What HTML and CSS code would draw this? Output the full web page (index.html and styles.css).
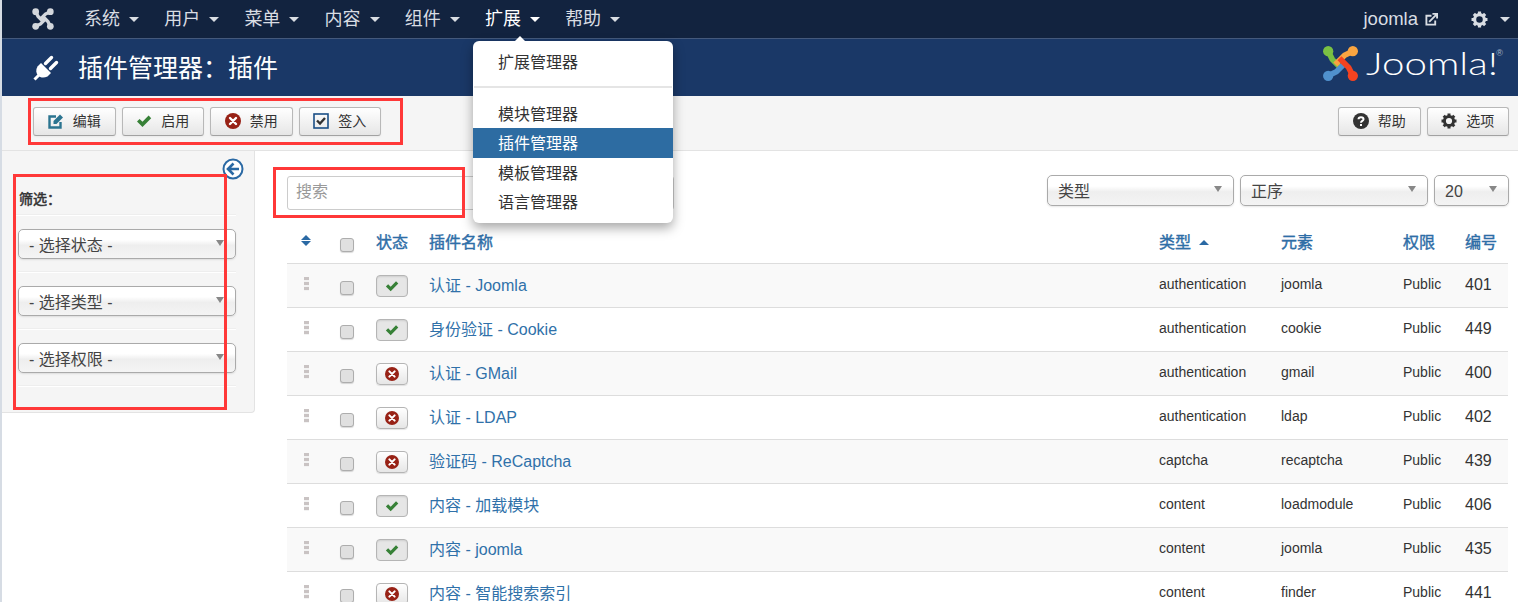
FILE: index.html
```html
<!DOCTYPE html>
<html lang="zh-CN">
<head>
    <meta charset="UTF-8">
    <title>插件管理器：插件</title>
    <link rel="stylesheet" href="styles.css">
</head>
<body>
    <svg class="defs" width="0" height="0">
        <symbol id="i-check" viewBox="0 0 16 16"><path d="M1 8.500l2.600-2.600 2.900 2.900L12.600 2.600 15.200 5.200 6.500 14z" fill="currentColor"/></symbol>
        <symbol id="i-cross" viewBox="0 0 16 16"><circle cx="8" cy="8" r="8" fill="currentColor"/><path d="M5 5l6 6M11 5l-6 6" stroke="#fff" stroke-width="2.400" stroke-linecap="round"/></symbol>
        <symbol id="i-gear" viewBox="0 0 16 16"><circle cx="8" cy="8" r="4.600" fill="none" stroke="currentColor" stroke-width="3"/><path d="M8 .5V4M8 12v3.500M.5 8H4M12 8h3.500M2.700 2.700l2.500 2.500M10.800 10.800l2.500 2.500M13.300 2.700l-2.500 2.500M5.200 10.800l-2.500 2.500" stroke="currentColor" stroke-width="3"/></symbol>
    </svg>

    <nav class="navbar">
        <svg class="nav-logo" viewBox="0 0 36 36">
            <g fill="none" stroke="currentColor" stroke-width="5.500">
                <path d="M6 6l4 8 9 9M30 6l-8 4-9 9M30 30l-4-8-9-9M6 30l8-4 9-9"/>
            </g>
            <g fill="currentColor"><circle cx="6" cy="6" r="5.500"/><circle cx="30" cy="6" r="5.500"/><circle cx="6" cy="30" r="5.500"/><circle cx="30" cy="30" r="5.500"/></g>
        </svg>
        <ul class="nav-menu">
            <li>系统<span class="caret"></span></li>
            <li>用户<span class="caret"></span></li>
            <li>菜单<span class="caret"></span></li>
            <li>内容<span class="caret"></span></li>
            <li>组件<span class="caret"></span></li>
            <li class="open">扩展<span class="caret"></span></li>
            <li>帮助<span class="caret"></span></li>
        </ul>
        <div class="nav-right">
            <span class="nav-user">joomla</span>
            <svg class="nav-ext" viewBox="0 0 14 14"><path d="M11 8v4.500H1.500V3H7" fill="none" stroke="currentColor" stroke-width="2"/><path d="M4.500 9.500L12 2M8 1h5v5" fill="none" stroke="currentColor" stroke-width="2"/></svg>
            <svg class="nav-gear"><use href="#i-gear"/></svg>
            <span class="caret"></span>
        </div>
    </nav>

    <header class="title-bar">
        <svg class="plug" viewBox="0 0 26 26">
            <path d="M8 8L18 18 14.500 21.500C10.500 23.500 7 22.500 5 20.500 3 18 2.500 15 4.500 11.500z" fill="#fff"/>
            <path d="M12.500 8.500L18.500 2.500M17.500 13.500L23.500 7.500" stroke="#fff" stroke-width="3.400" stroke-linecap="round"/>
            <path d="M1.500 24.500L6 20" stroke="#fff" stroke-width="3"/>
        </svg>
        <h1>插件管理器：插件</h1>
        <div class="brand">
            <svg class="brand-mark" viewBox="0 0 36 36">
                <g fill="none" stroke-width="5.500">
                    <path d="M6 6l4 8 9 9" stroke="#7ac143"/>
                    <path d="M6 30l8-4 9-9" stroke="#5091cd"/>
                    <path d="M30 6l-8 4-9 9" stroke="#f9a541"/>
                    <path d="M30 30l-4-8-9-9" stroke="#f44321"/>
                </g>
                <circle cx="6" cy="6" r="5" fill="#7ac143"/><circle cx="30" cy="6" r="5" fill="#f9a541"/>
                <circle cx="6" cy="30" r="5" fill="#5091cd"/><circle cx="30" cy="30" r="5" fill="#f44321"/>
            </svg>
            <span class="brand-name">Joomla!</span><sup class="brand-reg">®</sup>
        </div>
    </header>

    <div class="toolbar">
        <button class="btn"><svg class="ico" viewBox="0 0 16 16"><path d="M12.500 9v5.500h-11v-11H8" fill="none" stroke="#2b7490" stroke-width="2.400"/><path d="M5.500 8l6.500-6.500 3 3L8.500 11h-3z" fill="#2b7490"/></svg>编辑</button>
        <button class="btn"><svg class="ico ico-green"><use href="#i-check"/></svg>启用</button>
        <button class="btn"><svg class="ico ico-red"><use href="#i-cross"/></svg>禁用</button>
        <button class="btn"><svg class="ico" viewBox="0 0 16 16"><rect x="1" y="1" width="14" height="14" fill="none" stroke="#1b4f86" stroke-width="1.600"/><path d="M4 7.500l3 3 5-5.500" fill="none" stroke="#333" stroke-width="2.400"/></svg>签入</button>
        <div class="toolbar-right">
            <button class="btn"><svg class="ico" viewBox="0 0 16 16"><circle cx="8" cy="8" r="8" fill="#333"/><path d="M5.500 6.200C5.500 3.600 10.500 3.600 10.500 6.200 10.500 8 8 7.800 8 9.800" fill="none" stroke="#fff" stroke-width="2"/><rect x="7" y="11" width="2" height="2" fill="#fff"/></svg>帮助</button>
            <button class="btn"><svg class="ico"><use href="#i-gear"/></svg>选项</button>
        </div>
    </div>

    <div class="content">
        <aside class="sidebar">
            <svg class="side-toggle" viewBox="0 0 22 22"><circle cx="11" cy="11" r="9.500" fill="#fff" stroke="#2a69a4" stroke-width="2"/><path d="M11.500 5.500L6 11l5.500 5.500M6.500 11H17" fill="none" stroke="#2a69a4" stroke-width="2.600"/></svg>
            <h4 class="side-title">筛选：</h4>
            <div class="side-row"><div class="select">- 选择状态 -</div></div>
            <div class="side-row"><div class="select">- 选择类型 -</div></div>
            <div class="side-row"><div class="select">- 选择权限 -</div></div>
        </aside>

        <main class="main">
            <div class="filter-bar">
                <input class="search" type="text" placeholder="搜索">
                <div class="select select-type">类型</div>
                <div class="select select-order">正序</div>
                <div class="select select-limit">20</div>
            </div>
            <table class="list">
                <colgroup>
                    <col class="c-sort"><col class="c-check"><col class="c-state"><col class="c-name">
                    <col class="c-type"><col class="c-elem"><col class="c-access"><col class="c-id">
                </colgroup>
                <thead>
                    <tr>
                        <th class="center"><span class="sort-up"></span><span class="sort-down"></span></th>
                        <th class="center"><span class="check"></span></th>
                        <th>状态</th>
                        <th>插件名称</th>
                        <th>类型<span class="asc"></span></th>
                        <th>元素</th>
                        <th>权限</th>
                        <th>编号</th>
                    </tr>
                </thead>
                <tbody>
                    <tr><td class="center"><span class="grip"></span></td><td class="center"><span class="check"></span></td><td><span class="state on"><svg><use href="#i-check"/></svg></span></td><td class="name">认证 - Joomla</td><td class="small">authentication</td><td class="small">joomla</td><td class="small">Public</td><td class="id">401</td></tr>
                    <tr><td class="center"><span class="grip"></span></td><td class="center"><span class="check"></span></td><td><span class="state on"><svg><use href="#i-check"/></svg></span></td><td class="name">身份验证 - Cookie</td><td class="small">authentication</td><td class="small">cookie</td><td class="small">Public</td><td class="id">449</td></tr>
                    <tr><td class="center"><span class="grip"></span></td><td class="center"><span class="check"></span></td><td><span class="state off"><svg><use href="#i-cross"/></svg></span></td><td class="name">认证 - GMail</td><td class="small">authentication</td><td class="small">gmail</td><td class="small">Public</td><td class="id">400</td></tr>
                    <tr><td class="center"><span class="grip"></span></td><td class="center"><span class="check"></span></td><td><span class="state off"><svg><use href="#i-cross"/></svg></span></td><td class="name">认证 - LDAP</td><td class="small">authentication</td><td class="small">ldap</td><td class="small">Public</td><td class="id">402</td></tr>
                    <tr><td class="center"><span class="grip"></span></td><td class="center"><span class="check"></span></td><td><span class="state off"><svg><use href="#i-cross"/></svg></span></td><td class="name">验证码 - ReCaptcha</td><td class="small">captcha</td><td class="small">recaptcha</td><td class="small">Public</td><td class="id">439</td></tr>
                    <tr><td class="center"><span class="grip"></span></td><td class="center"><span class="check"></span></td><td><span class="state on"><svg><use href="#i-check"/></svg></span></td><td class="name">内容 - 加载模块</td><td class="small">content</td><td class="small">loadmodule</td><td class="small">Public</td><td class="id">406</td></tr>
                    <tr><td class="center"><span class="grip"></span></td><td class="center"><span class="check"></span></td><td><span class="state on"><svg><use href="#i-check"/></svg></span></td><td class="name">内容 - joomla</td><td class="small">content</td><td class="small">joomla</td><td class="small">Public</td><td class="id">435</td></tr>
                    <tr><td class="center"><span class="grip"></span></td><td class="center"><span class="check"></span></td><td><span class="state off"><svg><use href="#i-cross"/></svg></span></td><td class="name">内容 - 智能搜索索引</td><td class="small">content</td><td class="small">finder</td><td class="small">Public</td><td class="id">441</td></tr>
                </tbody>
            </table>
        </main>
    </div>

    <ul class="dropdown">
        <li>扩展管理器</li>
        <li class="divider"></li>
        <li>模块管理器</li>
        <li class="active">插件管理器</li>
        <li>模板管理器</li>
        <li>语言管理器</li>
    </ul>

    <!-- 截图上的红框标注 -->
    <div class="mark mark-toolbar"></div>
    <div class="mark mark-filter"></div>
    <div class="mark mark-search"></div>
</body>
</html>
```

FILE: styles.css
```css
* {
    margin: 0;
    padding: 0;
    box-sizing: border-box;
}

html, body {
    height: 602px;
    overflow: hidden;
}

body {
    position: relative;
    background: #fff;
    color: #333;
    font-family: "Liberation Sans", "Noto Sans CJK SC", sans-serif;
    font-size: 14px;
    border-left: 2px solid #d6dce4;
}

ul {
    list-style: none;
}

.defs {
    position: absolute;
}

.caret {
    display: inline-block;
    width: 0;
    height: 0;
    border-left: 5px solid transparent;
    border-right: 5px solid transparent;
    border-top: 5px solid #d9dde3;
}

/* 顶部导航 */
.navbar {
    display: flex;
    align-items: center;
    height: 39px;
    padding-left: 30px;
    background: #12233f;
    border-bottom: 1px solid #44597c;
    color: #d9dde3;
    font-size: 18px;
}

.nav-logo {
    width: 22px;
    height: 22px;
    color: #d3d7dc;
}

.nav-menu {
    display: flex;
    gap: 25.200px;
    margin-left: 30px;
}

.nav-menu li {
    display: flex;
    align-items: center;
    gap: 9px;
    line-height: 38px;
}

.nav-menu .open {
    color: #fff;
}

.nav-menu .open .caret {
    border-top-color: #fff;
}

.nav-right {
    display: flex;
    align-items: center;
    margin-left: auto;
    padding-right: 8px;
}

.nav-user {
    font-size: 18.500px;
}

.nav-ext {
    width: 13px;
    height: 13px;
    margin: 0 33px 0 7px;
}

.nav-gear {
    width: 17px;
    height: 17px;
    margin-right: 12px;
}

/* 标题栏 */
.title-bar {
    display: flex;
    align-items: center;
    height: 57px;
    padding-left: 31px;
    background: #1a3867;
    color: #fff;
}

.plug {
    width: 26px;
    height: 26px;
}

.title-bar h1 {
    margin-left: 19px;
    padding-bottom: 4px;
    font-size: 25px;
    font-weight: normal;
}

.brand {
    display: flex;
    align-items: center;
    margin-left: auto;
    padding: 0 15px 8px 0;
}

.brand-mark {
    width: 37px;
    height: 37px;
}

.brand-name {
    display: inline-block;
    width: 130px;
    margin-left: 7px;
    padding-bottom: 2px;
    font-family: Lato, "Liberation Sans", sans-serif;
    font-size: 32px;
    font-weight: 300;
    transform: scaleX(1.26);
    transform-origin: left center;
}

.brand-reg {
    align-self: flex-start;
    margin-top: 5px;
    font-size: 9px;
    color: #a9b4c6;
}

/* 工具栏 */
.toolbar {
    display: flex;
    align-items: flex-start;
    gap: 6px;
    height: 55px;
    padding: 11px 9px 0 31px;
    background: #f5f5f5;
    border-bottom: 1px solid #e3e3e3;
}

.toolbar-right {
    display: flex;
    gap: 6px;
    margin-left: auto;
}

.btn {
    display: flex;
    align-items: center;
    justify-content: center;
    width: 82.500px;
    height: 29px;
    padding-bottom: 4px;
    background: linear-gradient(#fff, #e6e6e6);
    border: 1px solid #b8b8b8;
    border-bottom-color: #a2a2a2;
    border-radius: 3px;
    color: #333;
    font-family: inherit;
    font-size: 14px;
    box-shadow: 0 1px 2px rgba(0, 0, 0, 0.05);
}

.ico {
    width: 16px;
    height: 16px;
    margin: 2px 9px 0 0;
}

.ico-green {
    color: #378137;
}

.ico-red {
    color: #982216;
}

/* 内容区 */
.content {
    display: flex;
    align-items: flex-start;
}

.sidebar {
    position: relative;
    width: 253px;
    height: 262px;
    padding-top: 35px;
    background: #f5f5f5;
    border-right: 1px solid #e3e3e3;
    border-bottom: 1px solid #e3e3e3;
    border-bottom-right-radius: 4px;
}

.side-toggle {
    position: absolute;
    top: 7px;
    right: 10px;
    width: 22px;
    height: 22px;
}

.side-title {
    height: 29px;
    margin: 0 18px 0 12px;
    padding-left: 5px;
    font-size: 14px;
    font-weight: normal;
    line-height: 26px;
    -webkit-text-stroke: 0.5px #333;
    border-bottom: 1px solid #eee;
    box-shadow: 0 1px 0 #fff;
}

.side-row {
    height: 57px;
    margin: 0 18px 0 16px;
    padding-top: 14px;
    border-bottom: 1px solid #eee;
    box-shadow: 0 1px 0 #fff;
}

.select {
    position: relative;
    height: 30px;
    padding-left: 10px;
    background: linear-gradient(#fff 0, #fff 35%, #eee 55%, #f4f4f4 100%);
    border: 1px solid #aaa;
    border-radius: 5px;
    box-shadow: 0 1px 2px rgba(0, 0, 0, 0.1);
    color: #444;
    font-size: 16px;
    line-height: 31px;
    white-space: nowrap;
}

.select::after {
    content: "";
    position: absolute;
    top: 10px;
    right: 11px;
    border-left: 4px solid transparent;
    border-right: 4px solid transparent;
    border-top: 6px solid #888;
}

.main {
    flex: 1;
    padding: 25px 9px 0 32px;
}

.filter-bar {
    display: flex;
    align-items: flex-start;
    height: 50px;
}

.search {
    width: 387px;
    height: 34px;
    padding: 0 0 3px 8px;
    margin-right: auto;
    border: 1px solid #ccc;
    border-radius: 3px;
    font-family: inherit;
    font-size: 16px;
    outline: none;
}

.search::placeholder {
    color: #999;
}

.filter-bar .select {
    height: 31px;
    margin-top: -1px;
    margin-left: 6px;
}

.select-type {
    width: 187px;
}

.select-order {
    width: 188px;
}

.select-limit {
    width: 75px;
}

/* 列表 */
.list {
    width: 1221px;
    border-collapse: collapse;
    table-layout: fixed;
}

.c-sort { width: 38px; }
.c-check { width: 43px; }
.c-state { width: 53px; }
.c-name { width: 730px; }
.c-type { width: 122px; }
.c-elem { width: 122px; }
.c-access { width: 62px; }
.c-id { width: 51px; }

.list th {
    height: 37px;
    padding: 0 8px 6px;
    color: #3071a9;
    font-size: 16px;
    font-weight: normal;
    -webkit-text-stroke: 0.4px #2a69a4;
    text-align: left;
    vertical-align: middle;
}

.list td {
    height: 44px;
    padding: 0 8px 2px;
    border-top: 1px solid #ddd;
    font-size: 16px;
    vertical-align: middle;
}

.list tbody tr:nth-child(odd) {
    background: #f9f9f9;
}

.list .center {
    text-align: center;
}

.list .name {
    color: #3071a9;
}

.list .small {
    font-size: 14px;
}

.list .id {
    padding-bottom: 0;
}

.sort-up, .sort-down {
    display: block;
    width: 0;
    height: 0;
    margin: 0 auto 1px;
    border-left: 5px solid transparent;
    border-right: 5px solid transparent;
}

.sort-up {
    border-bottom: 5px solid #2a69a4;
}

.sort-down {
    border-top: 5px solid #2a69a4;
}

.asc {
    display: inline-block;
    width: 0;
    height: 0;
    margin-left: 8px;
    vertical-align: 3px;
    border-left: 5px solid transparent;
    border-right: 5px solid transparent;
    border-bottom: 5px solid #2a69a4;
}

.check {
    display: inline-block;
    width: 14px;
    height: 14px;
    margin-top: 8px;
    vertical-align: middle;
    background: #e0e0e0;
    border: 1px solid #adadad;
    border-radius: 3px;
    box-shadow: 0 1px 1px rgba(0, 0, 0, 0.15);
}

.grip {
    display: block;
    width: 5px;
    height: 14px;
    margin: 0 auto;
    background: repeating-linear-gradient(#c9c3c3 0, #c9c3c3 3px, #f3f3f3 3px, #f3f3f3 5px);
}

.state {
    display: flex;
    align-items: center;
    justify-content: center;
    width: 32px;
    height: 22px;
    margin-top: 3px;
    border: 1px solid #b5b5b5;
    border-radius: 4px;
    box-shadow: 0 1px 1px rgba(0, 0, 0, 0.1);
}

.state svg {
    width: 14px;
    height: 14px;
}

.state.on {
    background: #e6e6e6;
    color: #378137;
    box-shadow: inset 0 1px 2px rgba(0, 0, 0, 0.1);
}

.state.off {
    background: linear-gradient(#fff, #e6e6e6);
    color: #982216;
}

/* 下拉菜单 */
.dropdown {
    position: absolute;
    top: 41px;
    left: 471px;
    width: 200px;
    height: 182px;
    padding-top: 6px;
    background: #fff;
    border-radius: 6px;
    box-shadow: 0 5px 12px rgba(0, 0, 0, 0.35);
    font-size: 16px;
    color: #333;
}

.dropdown::before {
    content: "";
    position: absolute;
    top: -5px;
    left: 41px;
    border-left: 6px solid transparent;
    border-right: 6px solid transparent;
    border-bottom: 6px solid #fff;
}

.dropdown li {
    height: 29.500px;
    padding-left: 25px;
    line-height: 31px;
}

.dropdown .divider {
    height: 2px;
    margin: 9px 1px 11px;
    padding: 0;
    background: #e5e5e5;
}

.dropdown .active {
    background: #2d6ca2;
    color: #fff;
}

/* 红框标注 */
.mark {
    position: absolute;
    border: 3px solid #ff3838;
    pointer-events: none;
}

.mark-toolbar {
    top: 98px;
    left: 26px;
    width: 375px;
    height: 47px;
}

.mark-filter {
    top: 174px;
    left: 11px;
    width: 214px;
    height: 236px;
}

.mark-search {
    top: 167px;
    left: 271px;
    width: 192px;
    height: 51px;
}
```
